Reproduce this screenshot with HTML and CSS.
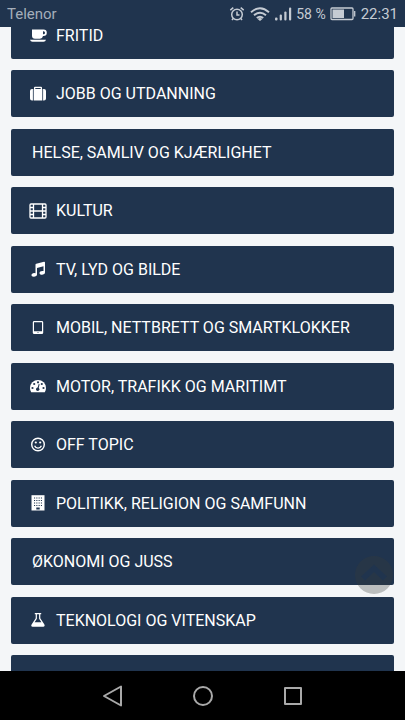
FILE: index.html
```html
<!DOCTYPE html>
<html lang="no">
<head>
<meta charset="utf-8">
<meta name="viewport" content="width=device-width, initial-scale=1">
<title>Forum</title>
<link rel="stylesheet" href="styles.css">
</head>
<body>
<header class="status">
  <span class="carrier">Telenor</span>
  <svg class="alarm" width="16" height="16" viewBox="0 0 16 16" fill="none" stroke="currentColor" stroke-width="1.5"><circle cx="8" cy="8.500" r="5.300"/><path d="M1.300 4.200 4.300 1.700M11.700 1.700l3 2.500M8 5.500V9h2.500M4.200 12.500 3 14M11.800 12.500 13 14"/></svg>
  <svg class="wifi" width="20" height="16" viewBox="0 0 20 16" fill="none" stroke="currentColor" stroke-width="1.900"><path d="M1 6.200Q10-1.800 19 6.200M4 9.300Q10 4 16 9.300M6.800 12Q10 9.300 13.200 12"/><path d="M7.600 12.900Q10 11 12.400 12.900L10 15z" fill="currentColor" stroke="none"/></svg>
  <svg class="signal" width="17" height="14" viewBox="0 0 17 14" fill="currentColor"><rect x="0" y="10.500" width="2.500" height="3" rx="1"/><rect x="4.700" y="7.500" width="2.200" height="6" rx="1"/><rect x="9.300" y="4.500" width="2.200" height="9" rx="1"/><rect x="14" y="0.500" width="2.200" height="13" rx="1"/></svg>
  <span class="percent">58 %</span>
  <svg class="battery" width="26" height="14" viewBox="0 0 26 14"><rect x="1" y="1" width="22" height="11.500" rx="1" fill="none" stroke="currentColor" stroke-width="1.300"/><rect x="2.500" y="2.500" width="11.500" height="8.500" fill="currentColor"/><path d="M24.700 4v5.500" stroke="currentColor" stroke-width="1.300"/></svg>
  <time>22:31</time>
</header>
<main>
  <ul class="forums">
    <li><a href="#fritid"><svg viewBox="0 0 18 18"><path fill-rule="evenodd" d="M3 2.500h11.500a3.300 3.300 0 0 1 0 6.600H14Q13.500 11.800 11 11.800H6Q3 11.800 3 8.800zM14 4.300v3h.5a1.500 1.500 0 0 0 0-3z"/><path d="M1 12.800h16q-.5 2-2.500 2h-11q-2 0-2.500-2z"/></svg>FRITID</a></li>
    <li><a href="#jobb"><svg viewBox="0 0 18 18"><path fill-rule="evenodd" d="M5 4V2.700Q5 1.700 6 1.700h6q1 0 1 1V4h.3v11.500H4.700V4zM6.300 4h5.400V2.900H6.300z"/><path d="M3.900 4v11.500H3q-2 0-2-2V6q0-2 2-2zM14.100 4v11.500h.9q2 0 2-2V6q0-2-2-2z"/></svg>JOBB OG UTDANNING</a></li>
    <li><a class="plain" href="#helse">HELSE, SAMLIV OG KJÆRLIGHET</a></li>
    <li><a href="#kultur"><svg viewBox="0 0 18 18" fill="none" stroke="#fff" stroke-width="1.300"><rect x="1" y="2" width="16" height="14" rx="1"/><path d="M4.500 2v14M13.500 2v14M4.500 9h9M1 5.500h3.500M1 9h3.500M1 12.500h3.500M13.500 5.500H17M13.500 9H17M13.500 12.500H17"/></svg>KULTUR</a></li>
    <li><a href="#tv"><svg viewBox="0 0 18 18"><path d="M6.500 4.800Q6.500 4 7.300 3.800L15 1.700q1-.2 1 .8v10c0 1.300-1.400 2.200-3 2.200s-2.500-.7-2.500-1.800 1.200-2 2.800-2q.8 0 1.200.2V6.200L8 8v6.500c0 1.300-1.400 2.200-3.200 2.200S2.500 16 2.500 15s1-2 2.700-2q.8 0 1.300.2z"/></svg>TV, LYD OG BILDE</a></li>
    <li><a href="#mobil"><svg viewBox="0 0 18 18"><path fill-rule="evenodd" d="M5.300 2h7.400q1.500 0 1.500 1.300v10.400q0 1.300-1.500 1.300H5.300q-1.500 0-1.500-1.300V3.300Q3.800 2 5.300 2zM5 3.200v9h8v-9zM8.500 13.200v.9h1v-.9z"/></svg>MOBIL, NETTBRETT OG SMARTKLOKKER</a></li>
    <li><a href="#motor"><svg viewBox="0 0 18 18"><path d="M1 11a8 8 0 0 1 16 0q0 2.200-1.200 4.200H2.200Q1 13.200 1 11z"/><g fill="#20344e"><circle cx="3.500" cy="11" r="1.100"/><circle cx="5.200" cy="7" r="1.100"/><circle cx="9" cy="5.300" r="1.100"/><circle cx="12.800" cy="7" r="1.100"/><circle cx="14.500" cy="11" r="1.100"/><circle cx="8.700" cy="12.300" r="1.700"/><path d="m8.200 12 1.500-5 .9.300-1.200 5z"/></g></svg>MOTOR, TRAFIKK OG MARITIMT</a></li>
    <li><a href="#off-topic"><svg viewBox="0 0 18 18"><circle cx="9" cy="8.500" r="6.300" fill="none" stroke="#fff" stroke-width="1.400"/><circle cx="6.800" cy="6.500" r="1.100"/><circle cx="11.200" cy="6.500" r="1.100"/><path d="M5.600 9.800q1 2.400 3.400 2.400t3.400-2.400" fill="none" stroke="#fff" stroke-width="1.300"/></svg>OFF TOPIC</a></li>
    <li><a href="#politikk"><svg viewBox="0 0 18 18"><path d="M2.500 1.200h13v15.300h-13z"/><path d="M5 4h8.500M5 6.500h8.500M5 9h8.500M5 11.500h8.500" fill="none" stroke="#20344e" stroke-width="1.100" stroke-dasharray="1.100 1.200"/><path d="M7.300 13.500h3.400v2H7.300z" fill="#20344e"/></svg>POLITIKK, RELIGION OG SAMFUNN</a></li>
    <li><a class="plain" href="#okonomi">ØKONOMI OG JUSS</a></li>
    <li><a href="#teknologi"><svg viewBox="0 0 18 18"><path fill-rule="evenodd" d="M5.800 2h6.400v1.200h-.9v4.100l4.100 6.300q1 1.900-.9 2.100h-11q-1.900-.2-.9-2.100l4.100-6.300V3.200h-.9zM7.900 3.200v4.500L5.600 11.300h6.800l-2.300-3.600V3.200z"/></svg>TEKNOLOGI OG VITENSKAP</a></li>
    <li><a href="#flere" aria-label="Flere"></a></li>
  </ul>
  <button class="to-top" type="button" aria-label="Til toppen"><svg width="38" height="38" viewBox="0 0 38 38"><path fill-rule="evenodd" d="M19 0a19 19 0 1 1 0 38 19 19 0 0 1 0-38zM6 20.500l4 4 9-8.500 9 8.500 4-4L19 8.500z"/></svg></button>
</main>
<nav class="system">
  <button type="button" aria-label="Tilbake"><svg viewBox="0 0 22 22"><path d="M19 1.500v19L2 11z"/></svg></button>
  <button type="button" aria-label="Hjem"><svg viewBox="0 0 22 22"><circle cx="11" cy="11" r="9"/></svg></button>
  <button type="button" aria-label="Oversikt"><svg viewBox="0 0 22 22"><rect x="3" y="3" width="16" height="16"/></svg></button>
</nav>
</body>
</html>
```
FILE: styles.css
```css
* {
  box-sizing: border-box;
}

body {
  margin: 0;
  height: 100vh;
  display: flex;
  flex-direction: column;
  overflow: hidden;
  background: #f4f6f8;
  font-family: Roboto, sans-serif;
}

.status {
  flex: none;
  display: flex;
  align-items: center;
  height: 27px;
  padding: 0 7px;
  background: #20344e;
  color: #c5cbd3;
  font-size: 15px;
  position: relative;
  z-index: 1;
}

.carrier {
  margin-right: auto;
  color: #a5aeba;
}

.alarm,
.wifi,
.battery {
  margin-right: 5px;
}

.signal,
.percent {
  margin-right: 4px;
}

.percent {
  font-size: 14px;
}

main {
  flex: 1;
  min-height: 0;
  display: flex;
  flex-direction: column;
  position: relative;
  overflow: hidden;
}

.forums {
  flex: 1;
  display: flex;
  flex-direction: column;
  justify-content: space-between;
  margin: -15px 11px -31px;
  padding: 0;
  list-style: none;
}

.forums a {
  display: flex;
  align-items: center;
  gap: 9px;
  height: 47px;
  padding: 0 18px;
  border-radius: 2px;
  background: #20344e;
  color: #fff;
  font-size: 16px;
  text-decoration: none;
}

.forums .plain {
  padding-left: 21px;
}

.forums svg {
  flex: none;
  width: 18px;
  height: 18px;
  fill: #fff;
}

.forums svg[fill="none"] {
  fill: none;
}

.to-top {
  position: absolute;
  right: 12px;
  bottom: 77px;
  padding: 0;
  border: 0;
  background: none;
}

.to-top svg {
  display: block;
  fill: rgba(56, 60, 56, 0.3);
}

.system {
  flex: none;
  display: flex;
  justify-content: center;
  align-items: center;
  gap: 68px;
  height: 49px;
  background: #000;
}

.system button {
  padding: 0;
  border: 0;
  background: none;
}

.system svg {
  display: block;
  width: 22px;
  height: 22px;
  fill: none;
  stroke: #a9a9a9;
  stroke-width: 2;
  stroke-linejoin: round;
}
```
